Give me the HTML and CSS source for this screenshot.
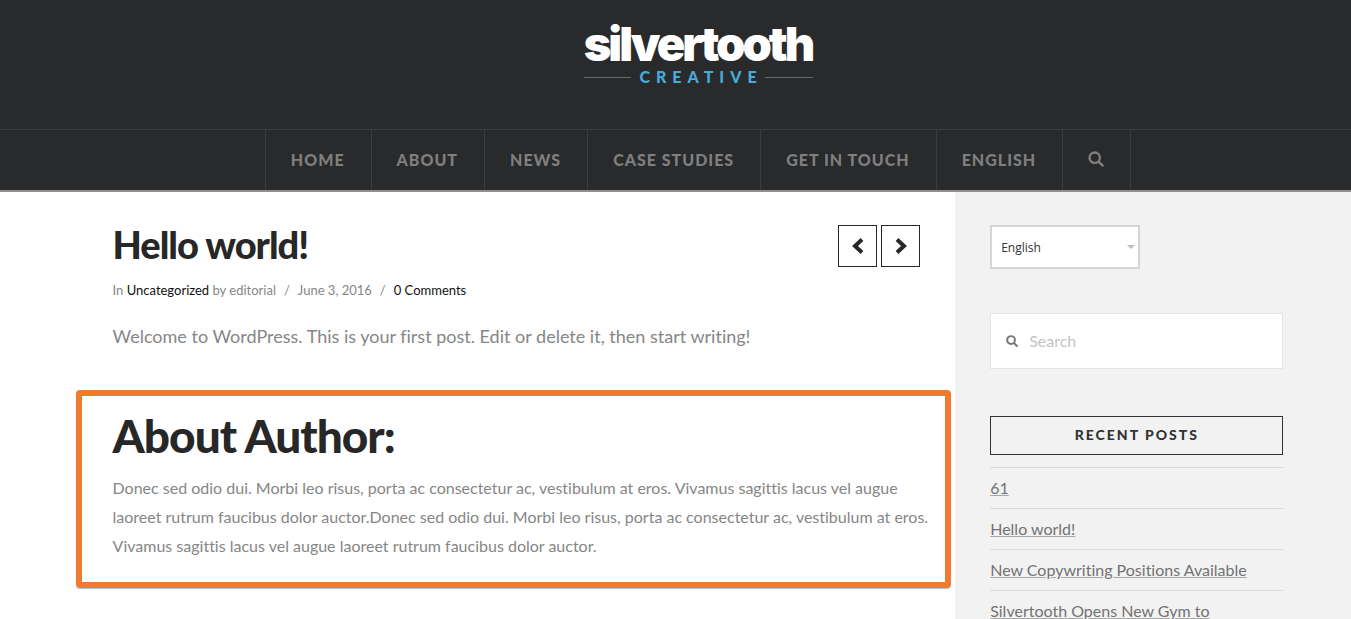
FILE: index.html
```html
<!DOCTYPE html>
<html lang="en">
<head>
  <meta charset="UTF-8">
  <meta name="viewport" content="width=device-width, initial-scale=1.0">
  <title>Hello world! | Silvertooth Creative</title>
  <link rel="stylesheet" href="styles.css">
</head>
<body>
  <header class="masthead">
    <a class="logo" href="#">
      <span class="logo-name">silvertooth</span>
      <span class="logo-tag">CREATIVE</span>
    </a>
    <nav class="navbar">
      <ul class="menu">
        <li><a href="#">HOME</a></li>
        <li><a href="#">ABOUT</a></li>
        <li><a href="#">NEWS</a></li>
        <li><a href="#">CASE STUDIES</a></li>
        <li><a href="#">GET IN TOUCH</a></li>
        <li><a href="#">ENGLISH</a></li>
        <li>
          <a href="#" aria-label="Search">
            <svg class="icon-search" viewBox="0 0 16 16"><circle cx="6.7" cy="6.7" r="5.2"/><path d="M10.6 10.6L14.6 14.6"/></svg>
          </a>
        </li>
      </ul>
    </nav>
  </header>
  <div class="layout">
    <main class="content">
      <article>
        <div class="entry-header">
          <h1>Hello world!</h1>
          <div class="entry-nav">
            <a href="#" aria-label="Previous post"><svg viewBox="0 0 16 18"><path d="M12 2.5L5 9L12 15.5"/></svg></a>
            <a href="#" aria-label="Next post"><svg viewBox="0 0 16 18"><path d="M4 2.5L11 9L4 15.5"/></svg></a>
          </div>
        </div>
        <p class="meta"><span>In <a href="#">Uncategorized</a> by editorial</span><span>/</span><span>June 3, 2016</span><span>/</span><a href="#">0 Comments</a></p>
        <p class="entry-text">Welcome to WordPress. This is your first post. Edit or delete it, then start writing!</p>
      </article>
      <section class="author-box">
        <h2>About Author:</h2>
        <p>Donec sed odio dui. Morbi leo risus, porta ac consectetur ac, vestibulum at eros. Vivamus sagittis lacus vel augue laoreet rutrum faucibus dolor auctor.Donec sed odio dui. Morbi leo risus, porta ac consectetur ac, vestibulum at eros. Vivamus sagittis lacus vel augue laoreet rutrum faucibus dolor auctor.</p>
      </section>
    </main>
    <aside class="sidebar">
      <div class="language">
        <select aria-label="Language">
          <option>English</option>
        </select>
      </div>
      <form class="search">
        <label for="s" aria-label="Search"><svg class="icon-search" viewBox="0 0 16 16"><circle cx="6.7" cy="6.7" r="5.2"/><path d="M10.6 10.6L14.6 14.6"/></svg></label>
        <input type="search" id="s" placeholder="Search">
      </form>
      <section class="recent">
        <h4>RECENT POSTS</h4>
        <ul>
          <li><a href="#">61</a></li>
          <li><a href="#">Hello world!</a></li>
          <li><a href="#">New Copywriting Positions Available</a></li>
          <li><a href="#">Silvertooth Opens New Gym to</a></li>
        </ul>
      </section>
    </aside>
  </div>
</body>
</html>
```
FILE: styles.css
```css
* {
  margin: 0;
  padding: 0;
  box-sizing: border-box;
}
html, body {
  height: 100%;
}
body {
  display: flex;
  flex-direction: column;
  overflow: hidden;
  font-family: Lato, sans-serif;
  font-size: 16px;
  font-variant-ligatures: none;
  color: #868686;
  background-color: #fff;
}
ul {
  list-style: none;
}
svg {
  display: block;
  fill: none;
  stroke: currentColor;
}

/* header */
.masthead {
  display: flex;
  flex-direction: column;
  align-items: center;
  flex-shrink: 0;
  background-color: #292a2c;
  border-bottom: 2px solid #908e8e;
}
.logo {
  display: flex;
  flex-direction: column;
  align-items: center;
  height: 129px;
  margin-left: 45px;
  padding-top: 21px;
  text-decoration: none;
}
.logo-name {
  font-family: Inter, sans-serif;
  font-size: 47px;
  font-weight: 900;
  line-height: 46px;
  letter-spacing: -3px;
  color: #fff;
}
.logo-tag {
  display: flex;
  align-items: center;
  gap: 8px;
  width: 229px;
  font-size: 16px;
  font-weight: 900;
  line-height: 20px;
  letter-spacing: 6px;
  color: #4aaad8;
}
.logo-tag::before, .logo-tag::after {
  content: "";
  flex: 1;
  height: 1px;
  background-color: #67686a;
}
.logo-tag::after {
  margin-left: -6px;
}
.navbar {
  width: 100%;
  border-top: 1px solid #3b3c3e;
}
.menu {
  display: flex;
  justify-content: center;
  margin-left: 45px;
}
.menu li {
  border-left: 1px solid #3b3c3e;
}
.menu li:last-child {
  border-right: 1px solid #3b3c3e;
}
.menu a {
  display: flex;
  align-items: center;
  height: 60px;
  padding: 0 26px 2px 25px;
  font-size: 16px;
  font-weight: 900;
  letter-spacing: 1px;
  color: #7f7f7f;
  text-decoration: none;
}
.icon-search {
  width: 16px;
  height: 16px;
  stroke-width: 2.4;
  stroke-linecap: round;
}

/* columns */
.layout {
  display: grid;
  grid-template-columns: 1fr 29.3%;
  flex: 1;
}
.content {
  padding: 33px 35px 0 calc(5vw + 45px);
}
.sidebar {
  padding: 33px 5vw 0 35px;
  background-color: #f2f2f2;
}

/* post */
.entry-header {
  display: flex;
  justify-content: space-between;
}
h1, h2 {
  font-weight: 900;
  letter-spacing: -1px;
  color: #272727;
}
h1 {
  font-size: 38px;
  line-height: 38px;
}
.entry-nav {
  display: flex;
  gap: 4px;
}
.entry-nav a {
  display: flex;
  align-items: center;
  justify-content: center;
  width: 39px;
  height: 42px;
  border: 1px solid #272727;
  color: #272727;
}
.entry-nav svg {
  width: 16px;
  height: 18px;
  stroke-width: 4;
}
.meta {
  display: flex;
  gap: 8px;
  margin-top: 13px;
  font-size: 13px;
  line-height: 20px;
}
.meta a {
  color: #111;
  text-decoration: none;
}
.entry-text {
  margin-top: 20px;
  font-size: 18px;
  line-height: 32px;
}
.author-box {
  margin: 38px -31px 0 -37px;
  padding: 15px 12px 22px 31px;
  border: 6px solid #ef7b30;
  border-radius: 4px;
  box-shadow: 0 1px 1px #bbb;
}
h2 {
  font-size: 46px;
  line-height: 50px;
}
.author-box p {
  margin-top: 12px;
  line-height: 29px;
}

/* sidebar */
.language {
  position: relative;
  width: 150px;
}
.language select {
  display: block;
  width: 100%;
  height: 44px;
  padding: 0 9px;
  appearance: none;
  font-family: "Open Sans", sans-serif;
  font-size: 12px;
  color: #333;
  background-color: #fff;
  border: 2px solid #d5d5d5;
  border-radius: 0;
}
.language::after {
  content: "";
  position: absolute;
  top: 20px;
  right: 5px;
  border: 4px solid transparent;
  border-top-color: #bbb;
  border-bottom: 0;
  pointer-events: none;
}
.search {
  display: flex;
  align-items: center;
  gap: 11px;
  height: 56px;
  margin-top: 44px;
  padding: 0 15px;
  background-color: #fff;
  border: 1px solid #e5e5e5;
}
.search .icon-search {
  width: 12px;
  height: 12px;
  color: #777;
  stroke-width: 2.6;
}
.search input {
  flex: 1;
  min-width: 0;
  padding-bottom: 2px;
  font-family: inherit;
  font-size: 16px;
  color: #555;
  background: none;
  border: 0;
}
.search input::placeholder {
  color: #c4c4c4;
}
.recent {
  margin-top: 47px;
}
.recent h4 {
  padding: 7px 0 9px;
  font-size: 14px;
  font-weight: 900;
  line-height: 21px;
  letter-spacing: 2px;
  text-align: center;
  color: #333;
  border: 1px solid #333;
}
.recent ul {
  margin-top: 12px;
}
.recent li {
  padding: 8px 0;
  line-height: 24px;
  border-top: 1px solid #dcdcdc;
}
.recent a {
  color: #727272;
  text-decoration-color: #a8a8a8;
}
```
